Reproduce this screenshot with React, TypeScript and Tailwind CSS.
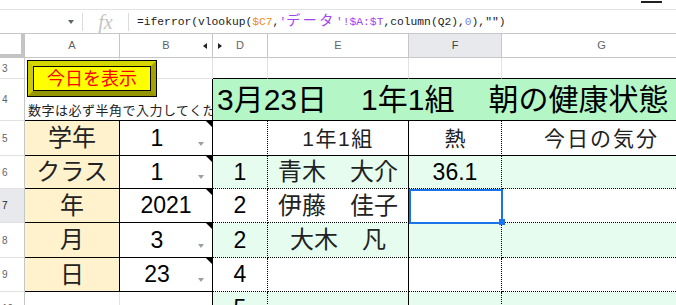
import React from 'react';

const font = "font-['Liberation_Sans','Noto_Sans_CJK_JP',sans-serif]";

type LeftRow = { n: string; label: string; value: string; drop: boolean };
type TableRow = { n: string; no: string; name: string; temp: string; green: boolean; active?: boolean };

const left: LeftRow[] = [
  { n: '6', label: 'クラス', value: '1', drop: true },
  { n: '7', label: '年', value: '2021', drop: false },
  { n: '8', label: '月', value: '3', drop: true },
  { n: '9', label: '日', value: '23', drop: true },
];

const table: TableRow[] = [
  { n: '6', no: '1', name: '青木　大介', temp: '36.1', green: true },
  { n: '7', no: '2', name: '伊藤　佳子', temp: '', green: false, active: true },
  { n: '8', no: '2', name: '大木　凡', temp: '', green: true },
  { n: '9', no: '4', name: '', temp: '', green: false },
];

function RowHead({ n, active }: { n: string; active?: boolean }) {
  return (
    <div
      className={`flex items-center pl-[2px] text-[10px] overflow-hidden border-r border-r-[#c4c7c5] border-b border-b-[#e1e1e1] ${
        active ? 'bg-[#e7e9ec] text-[#202124]' : 'bg-white text-[#5f6368]'
      }`}
    >
      {n}
    </div>
  );
}

function ColHead({ label, active, children }: { label: string; active?: boolean; children?: React.ReactNode }) {
  return (
    <div
      className={`relative flex items-center justify-center text-[11px] border-r border-b border-[#c4c7c5] ${
        active ? 'bg-[#e7e9ec] text-[#3c4043]' : 'bg-white text-[#5f6368]'
      }`}
    >
      {label}
      {children}
    </div>
  );
}

// black note marker in the top right corner
function Corner() {
  return <span className="absolute right-0 top-0 w-0 h-0 border-l-[6px] border-l-transparent border-t-[6px] border-t-black" />;
}

// data validation dropdown arrow
function Drop() {
  return <span className="absolute right-[8px] bottom-[9px] w-0 h-0 border-x-[3.5px] border-x-transparent border-t-[4px] border-t-[#9aa0a6]" />;
}

function FormulaBar() {
  return (
    <div className="h-[24px] flex items-center border-b border-[#c4c7c5] bg-white">
      <div className="w-[82px] h-full flex items-center justify-end pr-[8px]">
        <span className="w-0 h-0 border-x-[3.5px] border-x-transparent border-t-[4px] border-t-[#5f6368]" />
      </div>
      <div className="w-px h-[18px] bg-[#dadce0]" />
      <div className="w-[45px] flex justify-center font-['Liberation_Serif',serif] italic text-[20px] leading-none text-[#c4c4c4]">
        fx
      </div>
      <div className="w-px h-[18px] bg-[#dadce0]" />
      <div className="pl-[8px] whitespace-nowrap font-['Liberation_Mono','Noto_Sans_CJK_JP',monospace] text-[11.3px] text-[#202124]">
        =iferror(vlookup(<span className="text-[#f08a24]">$C7</span>,
        <span className="text-[#a142f4]">
          '<span className="text-[14px] tracking-[2.6px]">データ</span>'!$A:$T
        </span>
        ,column(Q2),<span className="text-[#7986e8]">0</span>),"")
      </div>
    </div>
  );
}

export default function App() {
  return (
    <div className={`relative w-[676px] h-[305px] overflow-hidden bg-white ${font}`}>
      <div className="h-[10px] flex border-b border-[#e3e3e3]">
        <div className="ml-[641px] mt-[1px] w-[21px] h-[2px] bg-[#202124]" />
      </div>
      <FormulaBar />

      <div className="grid w-[702px] grid-cols-[25px_95px_93px_55px_141px_93px_200px] grid-rows-[24px_21px_42px_35px_33px_34px_35px_34px_34px]">
        {/* column headers */}
        <div className="bg-white border-r-4 border-b-4 border-[#c4c4c4]" />
        <ColHead label="A" />
        <ColHead label="B">
          <span className="absolute right-[5px] top-[9px] w-0 h-0 border-y-[3.5px] border-y-transparent border-r-[4px] border-r-[#202124]" />
        </ColHead>
        <ColHead label="D">
          <span className="absolute left-[5px] top-[9px] w-0 h-0 border-y-[3.5px] border-y-transparent border-l-[4px] border-l-[#202124]" />
        </ColHead>
        <ColHead label="E" />
        <ColHead label="F" active />
        <ColHead label="G" />

        {/* row 3 */}
        <RowHead n="3" />
        <div className="border-r border-b border-[#e2e2e2]" />
        <div className="border-r border-b border-[#e2e2e2]" />
        <div className="border-r border-r-[#e2e2e2] border-b border-b-black" />
        <div className="border-r border-r-[#e2e2e2] border-b border-b-black" />
        <div className="border-r border-r-[#e2e2e2] border-b border-b-black" />
        <div className="border-r border-r-[#e2e2e2] border-b border-b-black" />

        {/* row 4 */}
        <RowHead n="4" />
        <div className="col-span-2 flex items-end pl-[3px] pb-[3px] overflow-hidden whitespace-nowrap text-[13px] leading-none tracking-[0.5px] text-[#222] border-r border-b border-black">
          数字は必ず半角で入力してください
        </div>
        <div className="col-span-4 flex items-center pl-[4px] overflow-hidden whitespace-nowrap bg-[#b5f6c6] text-[30px] leading-none text-black border-b border-black">
          3月23日<span className="inline-block w-[34px]">　</span>1年1組<span className="inline-block w-[34px]">　</span>朝の健康状態
        </div>

        {/* row 5 */}
        <RowHead n="5" />
        <div className="flex items-center justify-center bg-[#fff2cc] text-[24px] leading-none text-[#222] border-r border-b border-black">学年</div>
        <div className="relative flex items-center justify-center pr-[18px] text-[23px] leading-none border-r border-b border-black">
          1
          <Corner />
          <Drop />
        </div>
        <div className="border-r border-b border-black [border-right-style:dotted]" />
        <div className="flex items-center justify-center text-[21px] leading-none tracking-[1.5px] text-[#222] border-r border-b border-black">1年1組</div>
        <div className="flex items-center justify-center text-[21px] leading-none text-[#222] border-r border-b border-black [border-right-style:dotted]">熱</div>
        <div className="flex items-center justify-center text-[21px] leading-none tracking-[2px] text-[#222] border-r border-r-[#e2e2e2] border-b border-b-black">今日の気分</div>

        {/* rows 6-9 */}
        {table.map((r, i) => (
          <React.Fragment key={r.n}>
            <RowHead n={r.n} active={r.active} />
            <div className="flex items-center justify-center bg-[#fff2cc] text-[24px] leading-none text-[#222] border-r border-b border-black">
              {left[i].label}
            </div>
            <div
              className={`relative flex items-center justify-center text-[23px] leading-none border-r border-b border-black ${
                left[i].drop ? 'pr-[18px]' : 'pr-0'
              }`}
            >
              {left[i].value}
              <Corner />
              {left[i].drop && <Drop />}
            </div>
            <div
              className={`flex items-center justify-center text-[23px] leading-none border-r border-b border-black border-dotted ${
                r.green ? 'bg-[#e6fcee]' : 'bg-white'
              }`}
            >
              {r.no}
            </div>
            <div
              className={`flex items-center justify-center whitespace-nowrap text-[24px] leading-none text-[#222] border-r border-b border-black [border-bottom-style:dotted] ${
                r.green ? 'bg-[#e6fcee]' : 'bg-white'
              }`}
            >
              {r.name}
            </div>
            <div
              className={`flex items-center justify-center text-[23px] leading-none border-r border-b border-black border-dotted ${
                r.green ? 'bg-[#e6fcee]' : 'bg-white'
              }`}
            >
              {r.temp}
            </div>
            <div
              className={`border-b border-black border-dotted ${r.green ? 'bg-[#e6fcee]' : 'bg-white'}`}
            />
          </React.Fragment>
        ))}

        {/* row 10 */}
        <RowHead n="10" />
        <div className="border-r border-b border-[#e2e2e2]" />
        <div className="border-r border-r-black border-b border-b-[#e2e2e2]" />
        <div className="flex items-center justify-center bg-[#e6fcee] text-[23px] leading-none border-r border-b border-black border-dotted">5</div>
        <div className="bg-[#e6fcee] border-r border-b border-black [border-bottom-style:dotted]" />
        <div className="bg-[#e6fcee] border-r border-b border-black border-dotted" />
        <div className="bg-[#e6fcee] border-b border-black border-dotted" />
      </div>

      {/* drawing: 今日を表示 button */}
      <div className="absolute left-[27px] top-[60px] w-[130px] h-[37px] border border-black">
        <div className="w-full h-full border-[5px] border-t-[#d6d600] border-l-[#cccc00] border-r-[#a3a300] border-b-[#959500]">
          <div className="w-full h-full flex items-center justify-center bg-[#ffff00] border border-black text-[18px] leading-none text-[#ff0000]">
            今日を表示
          </div>
        </div>
      </div>

      {/* selected cell F7 */}
      <div className="absolute left-[409px] top-[189px] w-[94px] h-[35px] border-2 border-[#1a73e8]" />
      <div className="absolute left-[499px] top-[219px] w-[6px] h-[6px] bg-[#1a73e8]" />
    </div>
  );
}
